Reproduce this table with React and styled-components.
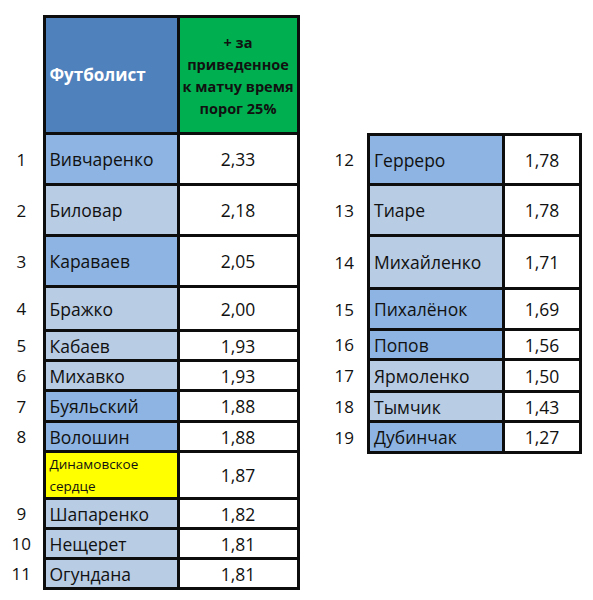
import styled, { createGlobalStyle } from 'styled-components';

const Global = createGlobalStyle`
  body {
    margin: 0;
    background: #ffffff;
    font-family: "Open Sans", "Liberation Sans", sans-serif;
    color: #111;
  }
`;

const Page = styled.div`
  display: flex;
  align-items: flex-start;
  gap: 22px;
  padding-top: 15px;
  width: 593px;
  height: 600px;
  box-sizing: border-box;
`;

const Table = styled.table`
  border-collapse: collapse;
  table-layout: fixed;
  margin-top: ${(p) => p.$offset || 0}px;
`;

const Col = styled.col`
  width: ${(p) => p.$w}px;
`;

const HeadCell = styled.th`
  border: 3px solid #0d0d0d;
  background: ${(p) => (p.$green ? '#00b050' : '#4f81bd')};
  color: ${(p) => (p.$green ? '#111' : '#ffffff')};
  font-size: ${(p) => (p.$green ? '14.5px' : '17px')};
  line-height: ${(p) => (p.$green ? '22px' : '20px')};
  font-weight: 700;
  text-align: ${(p) => (p.$green ? 'center' : 'left')};
  padding: ${(p) => (p.$green ? '2px 2px 0' : '0 4px')};
  height: 112px;
`;

const NumCell = styled.td`
  border: none;
  text-align: center;
  font-size: 17px;
  padding: 0;
`;

const tones = {
  dark: '#8db4e2',
  light: '#b8cce4',
  yellow: '#ffff00',
};

const NameCell = styled.td`
  border: 3px solid #0d0d0d;
  background: ${(p) => tones[p.$tone]};
  font-size: ${(p) => (p.$small ? '13.5px' : '17.5px')};
  line-height: ${(p) => (p.$small ? '22px' : '20px')};
  padding: 0 4px;
  white-space: nowrap;
  height: ${(p) => p.$h}px;
  box-sizing: border-box;
`;

const ValueCell = styled.td`
  border: 3px solid #0d0d0d;
  background: #ffffff;
  text-align: center;
  font-size: 17.5px;
  padding: 0;
`;

const left = [
  ['1', 'Вивчаренко', '2,33', 'dark', 51],
  ['2', 'Биловар', '2,18', 'light', 51],
  ['3', 'Караваев', '2,05', 'dark', 51],
  ['4', 'Бражко', '2,00', 'light', 44],
  ['5', 'Кабаев', '1,93', 'light', 30],
  ['6', 'Михавко', '1,93', 'light', 30],
  ['7', 'Буяльский', '1,88', 'dark', 31],
  ['8', 'Волошин', '1,88', 'dark', 30],
  ['', 'Динамовское сердце', '1,87', 'yellow', 47],
  ['9', 'Шапаренко', '1,82', 'light', 30],
  ['10', 'Нещерет', '1,81', 'light', 30],
  ['11', 'Огундана', '1,81', 'light', 30],
];

const right = [
  ['12', 'Герреро', '1,78', 'dark', 50],
  ['13', 'Тиаре', '1,78', 'light', 51],
  ['14', 'Михайленко', '1,71', 'light', 53],
  ['15', 'Пихалёнок', '1,69', 'dark', 41],
  ['16', 'Попов', '1,56', 'dark', 30],
  ['17', 'Ярмоленко', '1,50', 'light', 32],
  ['18', 'Тымчик', '1,43', 'light', 30],
  ['19', 'Дубинчак', '1,27', 'dark', 31],
];

const Rows = ({ data }) =>
  data.map(([n, name, v, tone, h]) => (
    <tr key={name}>
      <NumCell>{n}</NumCell>
      <NameCell $tone={tone} $h={h} $small={tone === 'yellow'}>
        {tone === 'yellow' ? (
          <>
            Динамовское
            <br />
            сердце
          </>
        ) : (
          name
        )}
      </NameCell>
      <ValueCell>{v}</ValueCell>
    </tr>
  ));

export default function App() {
  return (
    <>
      <Global />
      <Page>
        <Table>
          <colgroup>
            <Col $w={44} />
            <Col $w={134} />
            <Col $w={120} />
          </colgroup>
          <thead>
            <tr>
              <NumCell />
              <HeadCell>Футболист</HeadCell>
              <HeadCell $green>
                + за
                <br />
                приведенное
                <br />к матчу время
                <br />
                порог 25%
              </HeadCell>
            </tr>
          </thead>
          <tbody>
            <Rows data={left} />
          </tbody>
        </Table>
        <Table $offset={118}>
          <colgroup>
            <Col $w={47} />
            <Col $w={135} />
            <Col $w={77} />
          </colgroup>
          <tbody>
            <Rows data={right} />
          </tbody>
        </Table>
      </Page>
    </>
  );
}
